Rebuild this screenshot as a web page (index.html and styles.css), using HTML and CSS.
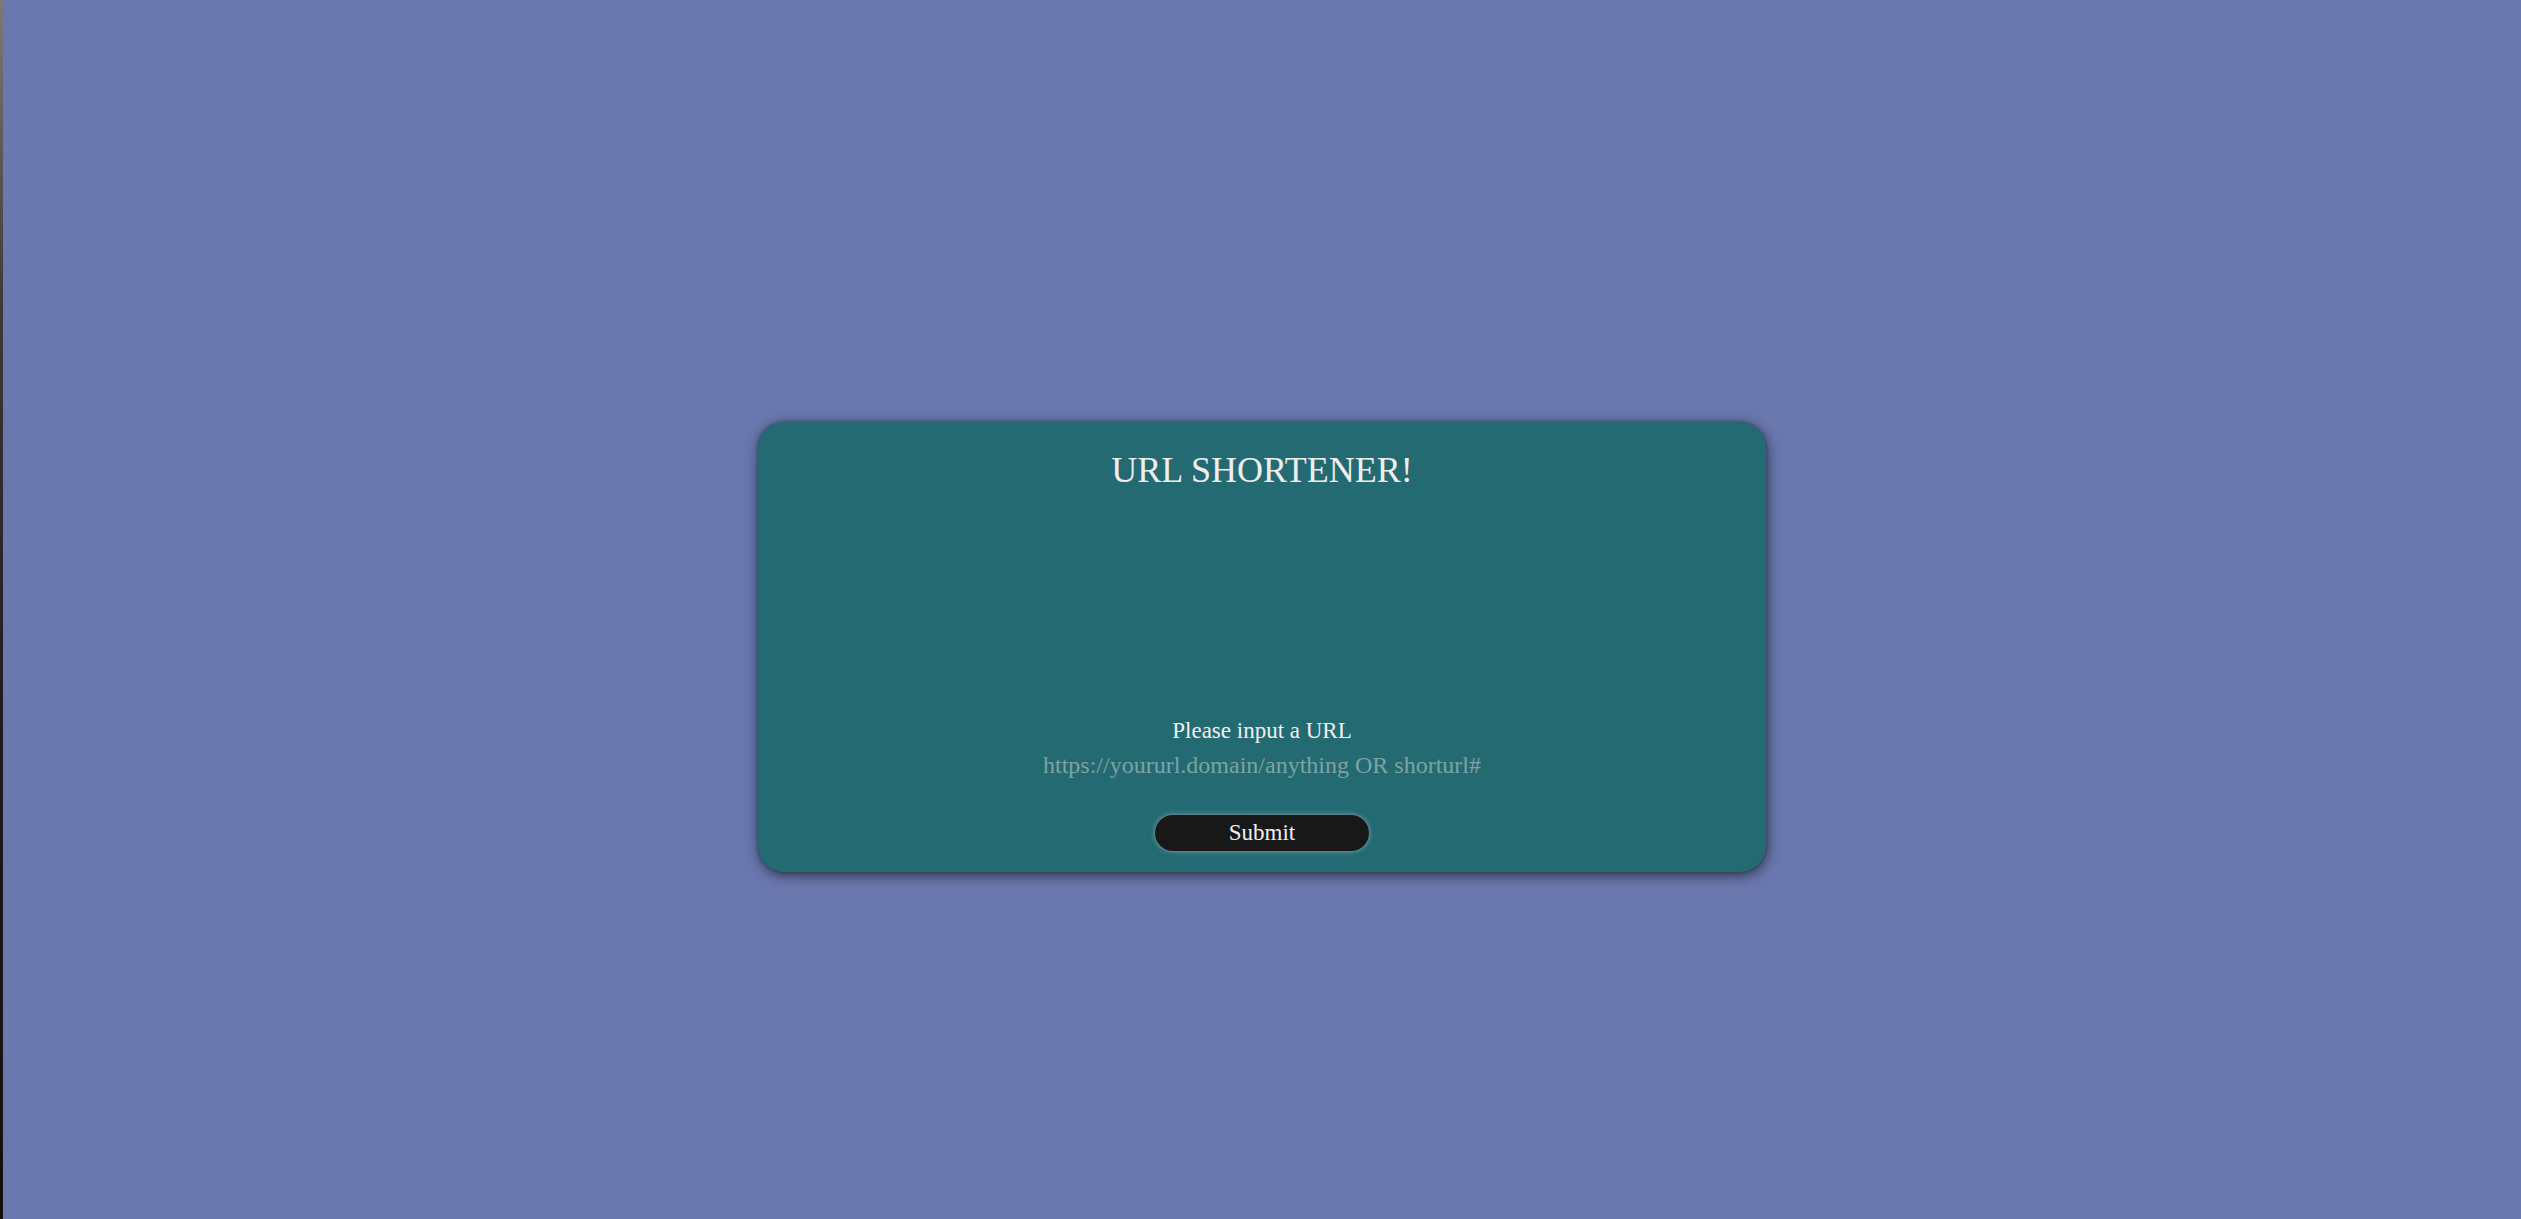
FILE: index.html
```html
<!DOCTYPE html>
<html lang="en">
<head>
<meta charset="utf-8">
<title>URL Shortener</title>
<link rel="stylesheet" href="styles.css">
</head>
<body>
<main class="page">
  <form class="card" onsubmit="return false;">
    <h1 class="title">URL SHORTENER!</h1>
    <div class="spacer"></div>
    <label class="label" for="url">Please input a URL</label>
    <input class="url-input" id="url" type="text" placeholder="https://yoururl.domain/anything OR shorturl#">
    <button class="submit" type="submit">Submit</button>
  </form>
</main>
</body>
</html>
```
FILE: styles.css
```css
html, body {
  margin: 0;
  padding: 0;
}
body {
  height: 100vh;
  overflow: hidden;
  background: #6a78af;
  border-left: 3px solid #222;
  border-image: linear-gradient(#7a7a7a 0%, #3a3a3a 25%, #1a1c1e 60%, #111 100%) 1;
  box-sizing: border-box;
  font-family: "Liberation Serif", "Times New Roman", serif;
  color: #ececec;
}
.page {
  display: flex;
  justify-content: center;
  padding-top: 422px;
}
.card {
  width: 40%;
  box-sizing: border-box;
  display: flex;
  flex-direction: column;
  align-items: center;
  background: #246a72;
  border-radius: 26px;
  padding: 28px 0 21px;
  box-shadow: 1px 3px 14px rgba(0, 0, 0, 0.6), 0 0 3px rgba(0, 0, 0, 0.3);
}
.title {
  margin: 0;
  font-weight: normal;
  font-size: 36px;
  line-height: 40px;
  color: #eeeeee;
}
.spacer {
  height: 227px;
}
.label {
  font-size: 23px;
  line-height: 28px;
  color: #f0f0f0;
}
.url-input {
  margin-top: 5px;
  width: 60%;
  height: 30px;
  padding: 0;
  border: 0;
  outline: none;
  background: transparent;
  text-align: center;
  font-family: "Liberation Serif", "Times New Roman", serif;
  font-size: 24px;
  line-height: 30px;
  color: #eeeeee;
}
.url-input::placeholder {
  color: #7fa2a6;
  opacity: 1;
}
.submit {
  margin-top: 35px;
  width: 214px;
  height: 36px;
  padding: 0;
  border: 0;
  border-radius: 18px;
  background: #181818;
  color: #f2f2f2;
  font-family: "Liberation Serif", "Times New Roman", serif;
  font-size: 23px;
  line-height: 36px;
  box-shadow: 0 0 5px rgba(210, 210, 210, 0.6);
  cursor: pointer;
}
```
